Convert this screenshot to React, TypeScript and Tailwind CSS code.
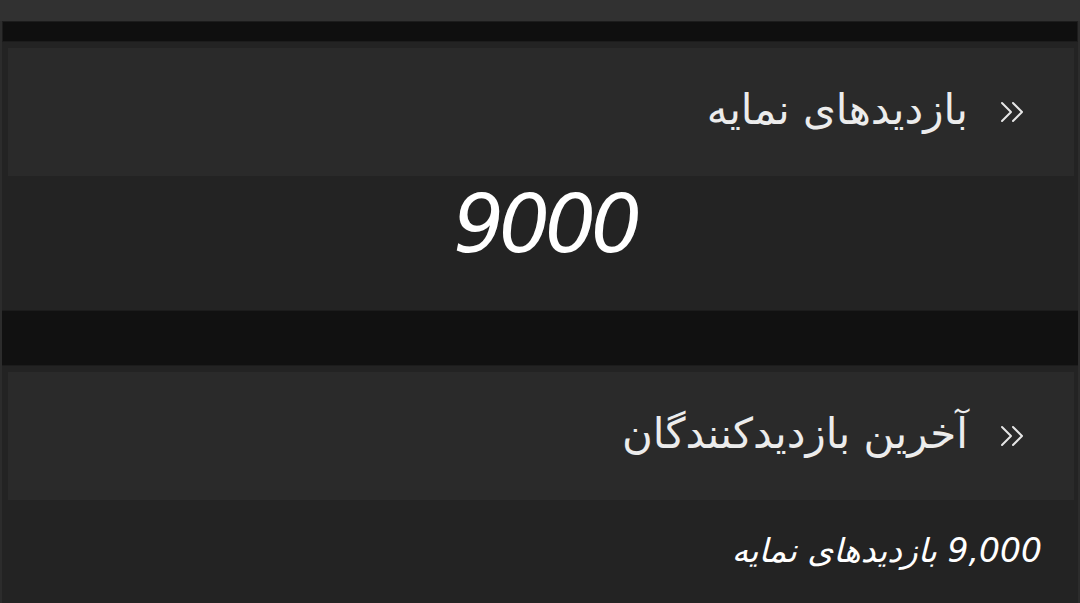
const font = { fontFamily: '"DejaVu Sans", "Noto Sans", sans-serif' };

function Chevrons() {
  return (
    <svg width="24" height="22" viewBox="0 0 24 22" fill="none" stroke="#e6e6e6" strokeWidth="2" strokeLinecap="round" strokeLinejoin="round">
      <path d="M2 2 L11 11 L2 20" />
      <path d="M13 2 L22 11 L13 20" />
    </svg>
  );
}

function SectionHeader({ title }: { title: string }) {
  return (
    <div className="h-[128px] bg-[#2a2a2a] flex items-center pr-[50px] gap-[32px]" dir="rtl">
      <Chevrons />
      <h2 className="text-[#ececec] text-[42px] leading-none pb-[4px]">{title}</h2>
    </div>
  );
}

export default function App() {
  return (
    <div className="w-[1080px] h-[603px] overflow-hidden bg-[#2c2c2c]" style={font}>
      {/* top strip */}
      <div className="h-[21px] bg-[#313131]" />

      <div className="mx-[2px] flex flex-col">
        {/* dark spacer */}
        <div className="h-[21px] bg-[#0f0f0f] border border-[#1c1c1c]" />

        {/* profile views card */}
        <section className="bg-[#232323] pt-[6px] px-[6px] pr-[4px] h-[268px] flex flex-col">
          <SectionHeader title="بازدیدهای نمایه" />
          <div className="flex-1 flex items-center justify-center pb-[36px] pl-[8px]">
            <span className="text-white italic text-[80px] tracking-[-5px] leading-none">9000</span>
          </div>
        </section>

        {/* dark spacer */}
        <div className="h-[56px] bg-[#111111] border-y border-[#1c1c1c]" />

        {/* last visitors card */}
        <section className="bg-[#232323] pt-[6px] px-[6px] pr-[4px] h-[240px] flex flex-col">
          <SectionHeader title="آخرین بازدیدکنندگان" />
          <div className="pt-[34px] pr-[32px] flex" dir="rtl">
            <span className="text-white italic text-[33px] leading-none">9,000 بازدیدهای نمایه</span>
          </div>
        </section>
      </div>
    </div>
  );
}
